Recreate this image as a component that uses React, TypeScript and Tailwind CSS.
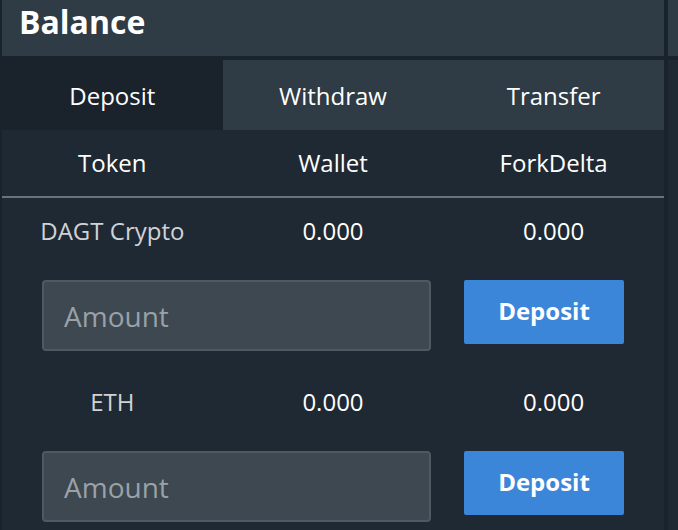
const tokens = [
  { name: "DAGT Crypto", wallet: "0.000", fork: "0.000" },
  { name: "ETH", wallet: "0.000", fork: "0.000" },
];

const tabs = ["Deposit", "Withdraw", "Transfer"];

export default function App() {
  return (
    <div
      className="flex min-h-screen w-[678px] gap-[4px] overflow-hidden bg-[#1a232b] pl-[2px] text-white"
      style={{ fontFamily: '"Open Sans", "Liberation Sans", sans-serif' }}
    >
      <div className="flex w-[662px] shrink-0 flex-col gap-[4px]">
        {/* Panel header */}
        <div className="flex h-[56px] items-center bg-[#2f3b45] px-[17px] pb-[12px]">
          <h1 className="text-[32px] font-bold leading-none">Balance</h1>
        </div>

        <div className="flex flex-1 flex-col bg-[#1f2933]">
          {/* Tabs */}
          <div className="grid h-[70px] grid-cols-3">
            {tabs.map((tab, i) => (
              <div
                key={tab}
                className={
                  i === 0
                    ? "flex items-center justify-center bg-[#1a232c] pt-[2px] text-[24px]"
                    : "flex items-center justify-center bg-[#2f3b45] pt-[2px] text-[24px]"
                }
              >
                {tab}
              </div>
            ))}
          </div>

          {/* Table header */}
          <div className="grid h-[68px] grid-cols-3 items-center border-b-2 border-[#68727b] text-[24px]">
            <div className="text-center">Token</div>
            <div className="text-center">Wallet</div>
            <div className="text-center">ForkDelta</div>
          </div>

          {tokens.map((t) => (
            <div key={t.name} className="pb-[18px]">
              <div className="grid h-[66px] grid-cols-3 items-center pb-[1px] text-[24px]">
                <div className="text-center text-[#cfd3d7]">{t.name}</div>
                <div className="text-center">{t.wallet}</div>
                <div className="text-center">{t.fork}</div>
              </div>
              <div className="mt-[16px] flex items-start pl-[40px]">
                <input
                  placeholder="Amount"
                  className="h-[71px] w-[389px] rounded-[4px] border-2 border-[#4f5962] bg-[#3e4850] px-[20px] text-[28px] text-white placeholder:text-[#9aa1a7] outline-none"
                />
                <button className="ml-[33px] h-[64px] w-[160px] rounded-[2px] bg-[#3b86d9] pb-[2px] text-[24px] font-bold">
                  Deposit
                </button>
              </div>
            </div>
          ))}
        </div>
      </div>

      {/* Neighbouring panel */}
      <div className="flex flex-1 flex-col gap-[4px]">
        <div className="h-[56px] bg-[#2f3b45]" />
        <div className="flex-1 bg-[#1f2933]" />
      </div>
    </div>
  );
}
